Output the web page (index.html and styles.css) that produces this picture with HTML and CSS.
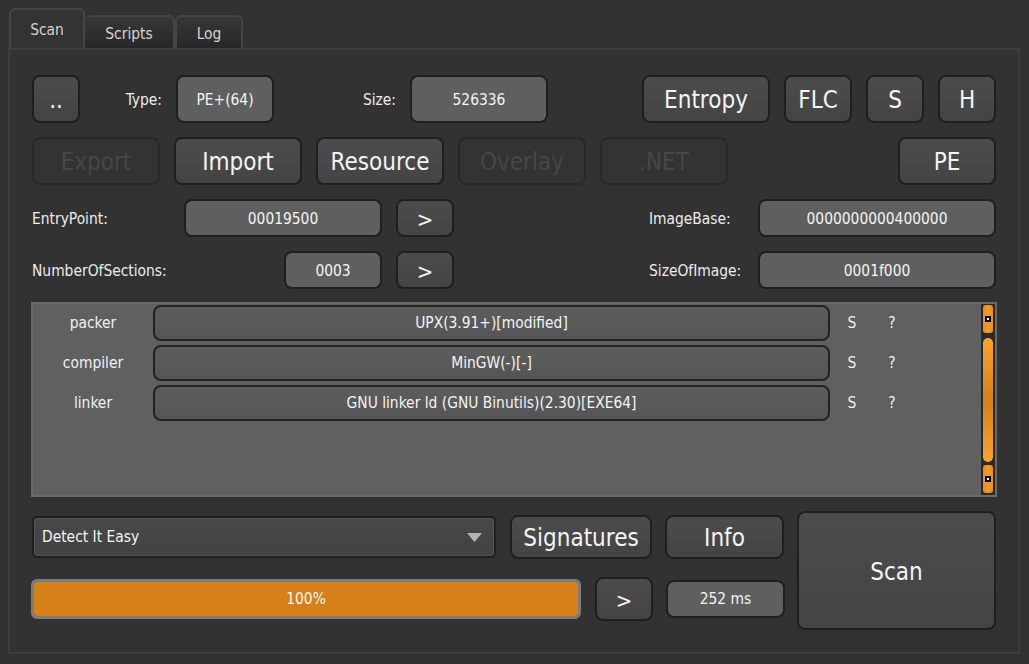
FILE: index.html
```html
<!DOCTYPE html>
<html>
<head>
<meta charset="utf-8">
<link rel="stylesheet" href="styles.css">
</head>
<body>
<div class="app">
  <div class="tabs">
    <div class="tab active tab-scan">Scan</div>
    <div class="tab tab-scripts">Scripts</div>
    <div class="tab tab-log">Log</div>
  </div>
  <div class="panel">
    <div class="row row-tall">
      <button class="btn big w-sq">..</button>
      <span class="lbl w-type">Type:</span>
      <div class="field w-typef">PE+(64)</div>
      <span class="lbl w-size">Size:</span>
      <div class="field w-sizef">526336</div>
      <div class="spacer"></div>
      <button class="btn big w-entropy">Entropy</button>
      <button class="btn big w-flc">FLC</button>
      <button class="btn big w-58">S</button>
      <button class="btn big w-58">H</button>
    </div>
    <div class="row row-tall">
      <button class="btn big w-128" disabled>Export</button>
      <button class="btn big w-128">Import</button>
      <button class="btn big w-128">Resource</button>
      <button class="btn big w-128" disabled>Overlay</button>
      <button class="btn big w-128" disabled>.NET</button>
      <div class="spacer"></div>
      <button class="btn big w-pe">PE</button>
    </div>
    <div class="row row-mid">
      <div class="group-left">
        <span class="lbl-left">EntryPoint:</span>
        <div class="field w-ep">00019500</div>
        <button class="btn arrow w-58">&gt;</button>
      </div>
      <div class="spacer"></div>
      <span class="lbl-left w-rlbl">ImageBase:</span>
      <div class="field w-rf">0000000000400000</div>
    </div>
    <div class="row row-mid">
      <div class="group-left">
        <span class="lbl-left">NumberOfSections:</span>
        <div class="field w-ns">0003</div>
        <button class="btn arrow w-58">&gt;</button>
      </div>
      <div class="spacer"></div>
      <span class="lbl-left w-rlbl">SizeOfImage:</span>
      <div class="field w-rf">0001f000</div>
    </div>
    <div class="results">
      <div class="res-rows">
        <div class="res-row">
          <span class="res-type">packer</span>
          <div class="res-name">UPX(3.91+)[modified]</div>
          <span class="res-s">S</span>
          <span class="res-q">?</span>
        </div>
        <div class="res-row">
          <span class="res-type">compiler</span>
          <div class="res-name">MinGW(-)[-]</div>
          <span class="res-s">S</span>
          <span class="res-q">?</span>
        </div>
        <div class="res-row">
          <span class="res-type">linker</span>
          <div class="res-name">GNU linker ld (GNU Binutils)(2.30)[EXE64]</div>
          <span class="res-s">S</span>
          <span class="res-q">?</span>
        </div>
      </div>
      <div class="scrollbar">
        <div class="sb-btn"></div>
        <div class="sb-handle"></div>
        <div class="sb-btn sb-btn-bottom"></div>
      </div>
    </div>
    <div class="bottom">
      <div class="bottom-left">
        <div class="brow">
          <div class="combo">
            <span>Detect It Easy</span>
            <svg class="combo-arrow" width="15" height="9" viewBox="0 0 15 9"><polygon points="0,0 15,0 7.5,9" fill="#b4b4b4"/></svg>
          </div>
          <button class="btn big w-sig">Signatures</button>
          <button class="btn big w-info">Info</button>
        </div>
        <div class="brow">
          <div class="progress"><div class="progress-fill">100%</div></div>
          <button class="btn arrow w-58 h-44">&gt;</button>
          <div class="field w-info h-38">252 ms</div>
        </div>
      </div>
      <button class="btn big w-scan">Scan</button>
    </div>
  </div>
</div>
</body>
</html>
```
FILE: styles.css
```css
* { box-sizing: border-box; }
html, body { margin: 0; padding: 0; }
body {
  background: #323232;
  width: 1029px;
  height: 664px;
  overflow: hidden;
  font-family: "DejaVu Sans Condensed", "DejaVu Sans", sans-serif;
  font-stretch: semi-condensed;
  font-size: 15.4px;
  color: #eeeeee;
}
.app { padding: 8px 0 0 8px; }

.tabs { display: flex; align-items: flex-end; height: 40px; padding-left: 1px; }
.tab {
  height: 33px;
  border: 2px solid #454545;
  border-bottom: none;
  border-radius: 6px 6px 0 0;
  background: linear-gradient(#383838, #272727);
  display: flex; align-items: center; justify-content: center;
  color: #d4d4d4;
  padding-top: 2px;
}
.tab.active { height: 40px; background: #333333; padding-top: 1px; }
.tab-scan { width: 76px; }
.tab-scripts { width: 90px; border-left: none; }
.tab-log { width: 68px; border-left: 2px solid #454545; }

.panel {
  width: 1012px;
  height: 606px;
  border: 2px solid #3e3e3e;
  padding: 25px 22px 0 22px;
  display: flex; flex-direction: column;
}

.row { display: flex; align-items: center; gap: 14px; margin-bottom: 14px; }
.row-tall { height: 48px; }
.row-mid { height: 38px; }
.spacer { flex: 1; }

.btn {
  font-family: inherit;
  font-stretch: inherit;
  height: 100%;
  border: 2px solid #1f1f1f;
  border-radius: 8px;
  background: linear-gradient(#4c4c4c, #444444);
  color: #f4f4f4;
  padding: 0;
  display: flex; align-items: center; justify-content: center;
  flex: none;
}
.btn.big { font-size: 24px; padding-top: 2px; }
.btn.arrow { font-size: 22px; padding-top: 3px; }
.btn:disabled {
  background: #333333;
  border-color: #282828;
  color: #474747;
}
.field {
  height: 100%;
  border: 2px solid #1f1f1f;
  border-radius: 8px;
  background: #5f5f5f;
  color: #f4f4f4;
  display: flex; align-items: center; justify-content: center;
  flex: none;
}
.row .field, .row .lbl, .row .lbl-left { padding-top: 2px; }
.lbl { text-align: right; color: #ececec; flex: none; }
.lbl-left { color: #ececec; flex: none; }

.w-sq { width: 48px; }
.w-type { width: 68px; }
.w-typef { width: 98px; }
.w-size { width: 108px; }
.w-sizef { width: 138px; }
.w-entropy { width: 128px; }
.w-flc { width: 68px; }
.w-58 { width: 58px; }
.w-128 { width: 128px; }
.w-pe { width: 98px; }
.w-ep { width: 198px; }
.w-ns { width: 98px; }
.w-rlbl { width: 95px; }
.w-rf { width: 238px; }

.group-left { display: flex; align-items: center; gap: 14px; width: 422px; height: 100%; }
.group-left .lbl-left { flex: 1; }

.results {
  margin: -1px -1px 0 -1px;
  height: 195px;
  border: 2px solid #6a6a6a;
  background: #606060;
  display: flex;
  flex: none;
}
.res-rows { flex: 1; padding-top: 1px; display: flex; flex-direction: column; gap: 4px; }
.res-row { display: flex; align-items: center; height: 36px; }
.res-type { width: 120px; text-align: center; color: #f0f0f0; }
.res-name {
  width: 677px; height: 36px;
  border: 2px solid #222222;
  border-radius: 8px;
  background: linear-gradient(#5d5d5d, #555555);
  display: flex; align-items: center; justify-content: center;
  color: #f4f4f4;
  margin-right: 2px;
}
.res-s, .res-q { width: 40px; text-align: center; color: #f0f0f0; }

.scrollbar {
  width: 14px;
  background: #2b2b2b;
  display: flex; flex-direction: column;
  padding: 1px 2px 2px 2px;
}
.sb-btn {
  height: 28px;
  border-radius: 3px;
  background: linear-gradient(90deg, #e98d22, #f39a2c, #e98d22);
  position: relative;
}
.sb-btn-bottom { margin-top: 3px; }
.sb-btn::after {
  content: "";
  position: absolute;
  left: 2px; top: 11px;
  width: 6px; height: 6px;
  background: #000;
}
.sb-btn::before {
  content: "";
  position: absolute;
  left: 4px; top: 13px;
  width: 2px; height: 2px;
  background: #fff;
  z-index: 1;
}
.sb-handle {
  flex: 1;
  margin-top: 5px;
  border-radius: 5px;
  background: linear-gradient(#f9a232, #d5811b 50%, #f9a232);
}

.bottom { display: flex; align-items: flex-start; gap: 13px; margin-top: 14px; }
.bottom-left { display: flex; flex-direction: column; gap: 18px; width: 752px; margin-top: 4px; }
.brow { display: flex; align-items: center; height: 44px; gap: 14px; }
.brow .w-info { margin-left: -1px; }
.combo {
  width: 464px; height: 42px;
  border: 2px solid #1f1f1f;
  border-radius: 5px;
  background: linear-gradient(#484848, #424242);
  box-shadow: inset 0 0 0 1px #535353;
  display: flex; align-items: center; justify-content: space-between;
  padding: 0 12px 0 8px;
  color: #f4f4f4;
  flex: none;
}
.combo-arrow { display: block; }
.w-sig { width: 142px; }
.w-info { width: 119px; }
.h-44 { height: 44px; }
.h-38 { height: 38px; }
.progress {
  width: 550px; height: 40px;
  margin-left: -1px;
  border: 3px solid #7c7c7c;
  border-radius: 6px;
  background: #5a5a5a;
  flex: none;
  overflow: hidden;
}
.progress-fill {
  width: 100%; height: 100%;
  background: #d68019;
  display: flex; align-items: center; justify-content: center;
  color: #f4f4f4;
}
.w-scan { width: 199px; height: 119px; }
```
